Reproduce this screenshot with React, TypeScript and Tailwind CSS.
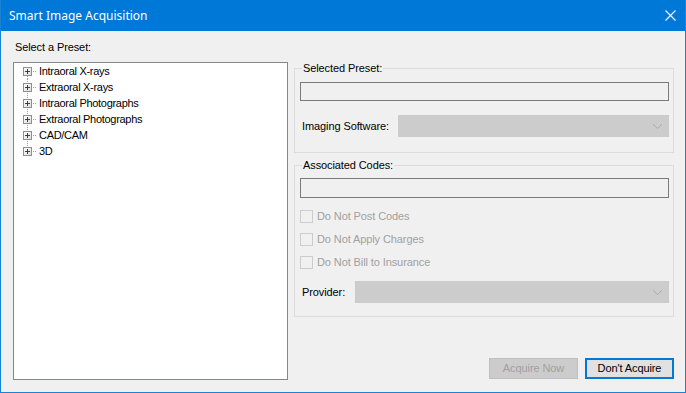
import React from "react";

const items = [
  "Intraoral X-rays",
  "Extraoral X-rays",
  "Intraoral Photographs",
  "Extraoral Photographs",
  "CAD/CAM",
  "3D",
];

function Connector({ first, last }: { first: boolean; last: boolean }) {
  const dots: React.ReactNode[] = [];
  const y0 = first ? 13 : 0;
  const y1 = last ? 4 : 16;
  for (let y = y0; y < y1; y += 2) {
    dots.push(<rect key={"v" + y} x={8} y={y} width={1} height={1} fill="#a0a0a0" />);
  }
  for (let x = 14; x < 18; x += 2) {
    dots.push(<rect key={"h" + x} x={x} y={8} width={1} height={1} fill="#a0a0a0" />);
  }
  return (
    <svg width="18" height="16" viewBox="0 0 18 16" shapeRendering="crispEdges" className="shrink-0">
      {dots}
      <defs>
        <linearGradient id="pg" x1="0" y1="0" x2="1" y2="1">
          <stop offset="0" stopColor="#ffffff" />
          <stop offset="1" stopColor="#dcdcdc" />
        </linearGradient>
      </defs>
      <rect x={4.5} y={4.5} width={8} height={8} fill="url(#pg)" stroke="#8e8f8f" strokeWidth={1} />
      <rect x={6} y={8} width={5} height={1} fill="#2b3f5c" />
      <rect x={8} y={6} width={1} height={5} fill="#2b3f5c" />
    </svg>
  );
}

function Chevron() {
  return (
    <svg width="11" height="7" viewBox="0 0 11 7" className="shrink-0">
      <path d="M1 1.2 L5.5 5.5 L10 1.2" fill="none" stroke="#adadad" strokeWidth="1" />
    </svg>
  );
}

function Combo({ width }: { width: string }) {
  return (
    <div className={`${width} h-[22px] bg-[#cccccc] border border-[#cccccc] flex items-center justify-end pr-[5px]`}>
      <Chevron />
    </div>
  );
}

function Check({ label }: { label: string }) {
  return (
    <div className="flex items-center h-[13px] ml-[5px]">
      <div className="w-[13px] h-[13px] border border-[#cccccc] bg-[#f0f0f0]" />
      <span className="ml-[4px] text-[#a0a0a0] leading-none">{label}</span>
    </div>
  );
}

export default function App() {
  return (
    <div
      className="w-[686px] h-[393px] bg-[#f0f0f0] border-x border-b border-[#1883d7] flex flex-col overflow-hidden text-[11px] tracking-[-0.1px] text-black"
      style={{ fontFamily: '"Liberation Sans", Arial, sans-serif' }}
    >
      <div className="h-[31px] -mx-px bg-[#0078d7] flex items-center justify-between pl-[9px] pr-[10px] shrink-0">
        <span className="text-white text-[12px] tracking-[0px]" style={{ fontFamily: '"Noto Sans", "Liberation Sans", sans-serif' }}>
          Smart Image Acquisition
        </span>
        <svg width="11" height="11" viewBox="0 0 11 11">
          <path d="M0.5 0.5 L10.5 10.5 M10.5 0.5 L0.5 10.5" stroke="#ffffff" strokeWidth="1.1" fill="none" />
        </svg>
      </div>

      <div className="flex items-start pt-[8px]">
        <div className="ml-[12px] w-[275px] flex flex-col">
          <div className="h-[16px] flex items-center pl-[2px]">Select a Preset:</div>
          <div className="mt-[7px] h-[318px] bg-white border border-[#828790] pl-[5px]">
            {items.map((it, i) => (
              <div key={it} className="h-[16px] flex items-center">
                <Connector first={i === 0} last={i === items.length - 1} />
                <span className="ml-[2px] leading-none tracking-[-0.3px]">{it}</span>
              </div>
            ))}
          </div>
        </div>

        <div className="ml-[6px] w-[380px] mt-[29px] flex flex-col">
          <div className="relative h-[85px] border border-[#dcdcdc] pl-[5px] pt-[13px]">
            <span className="absolute left-[7px] top-[-8px] h-[14px] flex items-center bg-[#f0f0f0] px-[1px]">Selected Preset:</span>
            <div className="w-[369px] h-[19px] border border-[#7a7a7a] bg-[#f0f0f0]" />
            <div className="mt-[14px] flex items-center">
              <span className="w-[98px] pl-[2px]">Imaging Software:</span>
              <Combo width="w-[271px]" />
            </div>
          </div>

          <div className="relative mt-[12px] h-[152px] border border-[#dcdcdc] pl-[5px] pt-[12px]">
            <span className="absolute left-[7px] top-[-8px] h-[14px] flex items-center bg-[#f0f0f0] px-[1px]">Associated Codes:</span>
            <div className="w-[369px] h-[20px] border border-[#7a7a7a] bg-[#f0f0f0]" />
            <div className="mt-[12px] flex flex-col gap-[10px] -ml-[5px]">
              <Check label="Do Not Post Codes" />
              <Check label="Do Not Apply Charges" />
              <Check label="Do Not Bill to Insurance" />
            </div>
            <div className="mt-[12px] flex items-center">
              <span className="w-[55px] pl-[2px]">Provider:</span>
              <Combo width="w-[314px]" />
            </div>
          </div>

          <div className="mt-[41px] flex justify-end gap-[7px]">
            <div className="w-[89px] h-[21px] bg-[#cccccc] border border-[#bfbfbf] flex items-center justify-center text-[#a0a0a0]">
              Acquire Now
            </div>
            <div className="w-[89px] h-[21px] bg-[#e1e1e1] border-2 border-[#0078d7] flex items-center justify-center">
              Don&apos;t Acquire
            </div>
          </div>
        </div>
      </div>
    </div>
  );
}
